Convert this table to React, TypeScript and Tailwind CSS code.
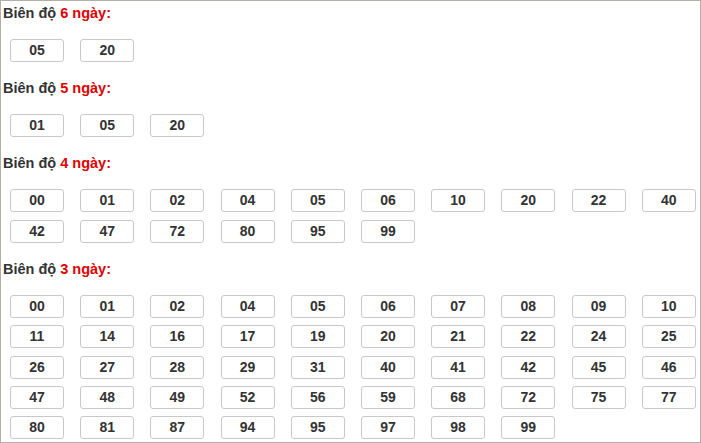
import React from 'react';

const sections: { days: number; nums: string[]; gap: string }[] = [
  { days: 6, nums: ['05', '20'], gap: 'gap-y-[8px]' },
  { days: 5, nums: ['01', '05', '20'], gap: 'gap-y-[8px]' },
  {
    days: 4,
    nums: ['00', '01', '02', '04', '05', '06', '10', '20', '22', '40', '42', '47', '72', '80', '95', '99'],
    gap: 'gap-y-[8px]',
  },
  {
    days: 3,
    nums: [
      '00', '01', '02', '04', '05', '06', '07', '08', '09', '10',
      '11', '14', '16', '17', '19', '20', '21', '22', '24', '25',
      '26', '27', '28', '29', '31', '40', '41', '42', '45', '46',
      '47', '48', '49', '52', '56', '59', '68', '72', '75', '77',
      '80', '81', '87', '94', '95', '97', '98', '99',
    ],
    gap: 'gap-y-[7.3px]',
  },
];

export default function App() {
  return (
    <div className="w-[701px] h-[443px] bg-white border border-[#b4afa6] pt-px font-['Liberation_Sans',Arial,sans-serif] text-[#333]">
      {sections.map((s) => (
        <div key={s.days} className="mb-[15px]">
          <div className="h-5 leading-5 pt-px pl-[2px] text-[14.5px] font-bold">
            Biên độ <span className="text-[#e00000]">{s.days} ngày:</span>
          </div>
          <div className={`mt-[17px] grid grid-cols-[repeat(10,70.2px)] pl-[9px] ${s.gap}`}>
            {s.nums.map((n, i) => (
              <div
                key={i}
                className="w-[54px] h-[23px] border border-[#c8c8c8] rounded-[3px] flex items-center justify-center text-[14px] font-bold"
              >
                {n}
              </div>
            ))}
          </div>
        </div>
      ))}
    </div>
  );
}
